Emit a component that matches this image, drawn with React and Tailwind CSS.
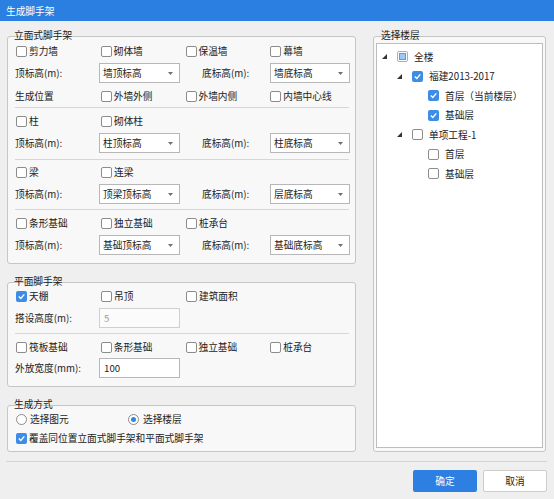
import React from "react";

const Check = ({ checked }) =>
  checked ? (
    <span className="w-[11px] h-[11px] rounded-[2px] bg-[#3d8de6] flex items-center justify-center shrink-0">
      <svg width="9" height="9" viewBox="0 0 9 9">
        <path d="M1.8 4.6 L3.8 6.5 L7.3 2.4" fill="none" stroke="#ffffff" strokeWidth="1.4" />
      </svg>
    </span>
  ) : (
    <span className="w-[11px] h-[11px] rounded-[2px] bg-white border border-[#8c8c8c] shrink-0" />
  );

const CB = ({ checked, label, w = "w-[85px]" }) => (
  <div className={`flex items-center gap-[2px] ${w}`}>
    <Check checked={checked} />
    <span>{label}</span>
  </div>
);

const Select = ({ text, w = "w-[81px]" }) => (
  <div className={`${w} h-[20px] border border-[#b7b7b7] bg-white flex items-center justify-between pl-[3px] pr-[6px]`}>
    <span>{text}</span>
    <svg width="5" height="3" viewBox="0 0 5 3">
      <polygon points="0,0 5,0 2.5,3" fill="#707070" />
    </svg>
  </div>
);

const Sep = ({ className }) => <div className={`h-px bg-[#d6d6d6] ml-[7px] mr-[6px] ${className}`} />;

const LabelSelectRow = ({ a, b, className }) => (
  <div className={`flex items-center h-[20px] ${className}`}>
    <span className="ml-[7px] w-[84px]">顶标高(m):</span>
    <Select text={a} />
    <span className="ml-[22px] w-[68px]">底标高(m):</span>
    <Select text={b} w="w-[80px]" />
  </div>
);

const Group = ({ title, className, children, legendLeft = "left-[6px]" }) => (
  <div className={`relative border border-[#c6c6c6] rounded-[3px] bg-[#f8f8f8] ${className}`}>
    <span className={`absolute top-[-8px] ${legendLeft} leading-[12px]`}>{title}</span>
    {children}
  </div>
);

const Radio = ({ on }) => (
  <span className="w-[11px] h-[11px] rounded-full bg-white border border-[#8c8c8c] flex items-center justify-center shrink-0">
    {on && <span className="w-[5px] h-[5px] rounded-full bg-[#2f86e6]" />}
  </span>
);

const Arrow = () => (
  <svg width="5" height="5" viewBox="0 0 5 5">
    <polygon points="5,0 5,5 0,5" fill="#333333" />
  </svg>
);

const TreeRow = ({ level, arrow, state, label }) => {
  const pl = level === 0 ? "pl-[5px]" : level === 1 ? "pl-[20px]" : "pl-[36px]";
  return (
    <div className={`flex items-center h-[19.5px] ${pl}`}>
      <span className="w-[15px] flex items-center">{arrow && <Arrow />}</span>
      {state === "partial" ? (
        <span className="w-[11px] h-[11px] rounded-[2px] border border-[#8fb3dc] bg-white flex items-center justify-center shrink-0">
          <span className="w-[7px] h-[7px] bg-[#9cc8f5] border border-[#5a9be3]" />
        </span>
      ) : (
        <Check checked={state === "on"} />
      )}
      <span className="ml-[6px]">{label}</span>
    </div>
  );
};

export default function App() {
  return (
    <div className="w-[554px] h-[499px] bg-[#efefef] text-[9.7px] leading-[12px] text-[#222222] font-['Noto_Sans_CJK_SC',sans-serif] flex flex-col overflow-hidden">
      <div className="h-[21px] bg-[#2b7fe0] text-white flex items-center pl-[6px]">生成脚手架</div>

      <div className="flex mt-[15px] h-[416px]">
        <div className="ml-[7px] w-[349px] flex flex-col">
          <Group title="立面式脚手架" className="h-[228px] pt-[4px]">
            <div className="flex items-center h-[20px] pl-[8px]">
              <CB label="剪力墙" />
              <CB label="砌体墙" />
              <CB label="保温墙" />
              <CB label="幕墙" />
            </div>
            <LabelSelectRow a="墙顶标高" b="墙底标高" className="mt-[2px]" />
            <div className="flex items-center h-[20px] mt-[3px]">
              <span className="ml-[7px] w-[86px]">生成位置</span>
              <CB label="外墙外侧" />
              <CB label="外墙内侧" />
              <CB label="内墙中心线" />
            </div>
            <Sep className="mt-[1px]" />
            <div className="flex items-center h-[20px] pl-[8px] mt-[3px]">
              <CB label="柱" />
              <CB label="砌体柱" />
            </div>
            <LabelSelectRow a="柱顶标高" b="柱底标高" className="mt-[2px]" />
            <Sep className="mt-[6px]" />
            <div className="flex items-center h-[20px] pl-[8px] mt-[2px]">
              <CB label="梁" />
              <CB label="连梁" />
            </div>
            <LabelSelectRow a="顶梁顶标高" b="层底标高" className="mt-[2px]" />
            <Sep className="mt-[5px]" />
            <div className="flex items-center h-[20px] pl-[8px] mt-[3px]">
              <CB label="条形基础" />
              <CB label="独立基础" />
              <CB label="桩承台" />
            </div>
            <LabelSelectRow a="基础顶标高" b="基础底标高" className="mt-[2px]" />
          </Group>

          <Group title="平面脚手架" className="h-[105px] mt-[18px] pt-[3px]">
            <div className="flex items-center h-[20px] pl-[8px]">
              <CB checked label="天棚" />
              <CB label="吊顶" />
              <CB label="建筑面积" />
            </div>
            <div className="flex items-center h-[20px] mt-[2px]">
              <span className="ml-[7px] w-[84px]">搭设高度(m):</span>
              <div className="w-[81px] h-[20px] border border-[#cfcfcf] bg-[#fbfbfb] flex items-center pl-[4px] text-[#9a9a9a]">5</div>
            </div>
            <Sep className="mt-[5px]" />
            <div className="flex items-center h-[20px] pl-[8px] mt-[3px]">
              <CB label="筏板基础" />
              <CB label="条形基础" />
              <CB label="独立基础" />
              <CB label="桩承台" />
            </div>
            <div className="flex items-center h-[20px] mt-[1px]">
              <span className="ml-[7px] w-[84px]">外放宽度(mm):</span>
              <div className="w-[81px] h-[20px] border border-[#b7b7b7] bg-white flex items-center pl-[4px]">100</div>
            </div>
          </Group>

          <Group title="生成方式" className="h-[47px] mt-[18px] pt-[4px]">
            <div className="flex items-center h-[18px] pl-[8px]">
              <div className="flex items-center gap-[3px] w-[112px]">
                <Radio />
                <span>选择图元</span>
              </div>
              <div className="flex items-center gap-[4px]">
                <Radio on />
                <span>选择楼层</span>
              </div>
            </div>
            <div className="flex items-center h-[18px] pl-[8px] mt-[1px]">
              <CB checked label="覆盖同位置立面式脚手架和平面式脚手架" w="w-auto" />
            </div>
          </Group>
        </div>

        <div className="ml-[17px] w-[173px]">
          <Group title="选择楼层" legendLeft="left-[7px]" className="h-[416px] pt-[6px] px-[2px] pb-[3px] flex flex-col">
            <div className="flex-1 bg-white border border-[#bdbdbd] pt-[3px]">
              <TreeRow level={0} arrow state="partial" label="全楼" />
              <TreeRow level={1} arrow state="on" label="福建2013-2017" />
              <TreeRow level={2} state="on" label="首层（当前楼层）" />
              <TreeRow level={2} state="on" label="基础层" />
              <TreeRow level={1} arrow state="off" label="单项工程-1" />
              <TreeRow level={2} state="off" label="首层" />
              <TreeRow level={2} state="off" label="基础层" />
            </div>
          </Group>
        </div>
      </div>

      <div className="h-px bg-[#d4d4d4] mt-[9px] ml-[6px] mr-[7px]" />

      <div className="flex justify-end gap-[6px] mt-[8px] mr-[7px]">
        <button className="w-[64px] h-[22px] rounded-[2px] bg-[#2d80e2] text-white flex items-center justify-center">确定</button>
        <button className="w-[64px] h-[22px] rounded-[2px] bg-white border border-[#cdcdcd] text-[#222] flex items-center justify-center">取消</button>
      </div>
    </div>
  );
}
